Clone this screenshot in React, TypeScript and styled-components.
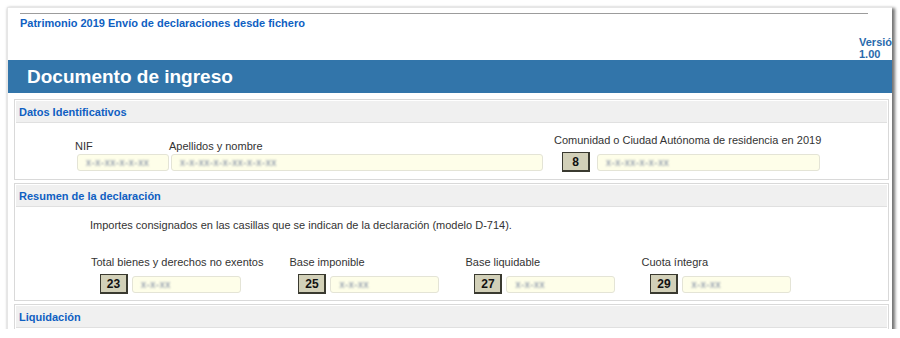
import React from "react";
import styled, { createGlobalStyle } from "styled-components";

const Global = createGlobalStyle`
  html, body { margin: 0; padding: 0; background: #ffffff; }
  body { font-family: "Liberation Sans", Arial, sans-serif; }
  * { box-sizing: border-box; }
`;

const Window = styled.div`
  margin: 7px 0 0 7px;
  width: 885px;
  height: 322px;
  border-left: 1px solid #e6e6e6;
  border-top: 1px solid #e6e6e6;
  box-shadow: 2px 2px 3px 1px rgba(0, 0, 0, 0.55);
  overflow: hidden;
  background: #fff;
  display: flex;
  flex-direction: column;
`;

const TopArea = styled.div`
  display: flex;
  flex-direction: column;
  padding-top: 5px;
`;

const Rule = styled.div`
  margin-left: 12px;
  width: 848px;
  height: 1px;
  background: #9c9c9c;
`;

const AppTitle = styled.div`
  margin-top: 3px;
  padding-left: 12px;
  font-size: 11px;
  line-height: 13px;
  font-weight: bold;
  color: #0f5fc2;
`;

const VersionBox = styled.div`
  align-self: flex-end;
  width: 33px;
  margin-top: 6px;
  white-space: nowrap;
  font-size: 11px;
  line-height: 12px;
  font-weight: bold;
  color: #2a6aac;
`;

const HeaderBar = styled.div`
  height: 33px;
  flex-shrink: 0;
  background: #3275aa;
  display: flex;
  align-items: center;
  padding-left: 19px;
  color: #fff;
  font-size: 19px;
  font-weight: bold;
`;

const Sections = styled.div`
  display: flex;
  flex-direction: column;
  gap: 3px;
  padding: 6px 3px 0 6px;
`;

const Section = styled.div`
  border: 1px solid #d9d9d9;
  padding: 1px;
  flex-shrink: 0;
`;

const SectionHeader = styled.div`
  height: 22px;
  background: #f0f0f0;
  border-bottom: 1px solid #e0e0e0;
  padding-left: 3px;
  display: flex;
  align-items: center;
  font-size: 11px;
  font-weight: bold;
  color: #0f5fc2;
`;

const IdBody = styled.div`
  height: 55px;
  display: flex;
  align-items: flex-end;
  padding: 0 0 6px 59px;
`;

const FieldRow = styled.div<{ $gap?: number }>`
  display: flex;
  align-items: flex-end;
  gap: ${(p) => p.$gap ?? 7}px;
`;

const Field = styled.div<{ $gapAfter?: number; $labelGap?: number; $indent?: number }>`
  display: flex;
  flex-direction: column;
  margin-right: ${(p) => p.$gapAfter ?? 0}px;
  & > ${FieldRow} {
    margin-top: ${(p) => p.$labelGap ?? 1}px;
    padding-left: ${(p) => p.$indent ?? 2}px;
  }
`;

const Label = styled.div`
  font-size: 11px;
  line-height: 14px;
  color: #333;
  white-space: nowrap;
`;

const CodeBox = styled.div`
  width: 28px;
  height: 20px;
  background: #d2d0b8;
  border: 1px solid #3a3a30;
  border-right-width: 2px;
  border-bottom-width: 2px;
  display: flex;
  align-items: center;
  justify-content: center;
  font-size: 12px;
  font-weight: bold;
  color: #111;
`;

const Input = styled.div<{ $w: number }>`
  width: ${(p) => p.$w}px;
  height: 17px;
  margin-bottom: 1px;
  background: #fefee9;
  border: 1px solid #e4e4d6;
  border-radius: 3px;
  display: flex;
  align-items: center;
  padding-left: 8px;
  overflow: hidden;
`;

const Blurred = styled.span`
  font-size: 10px;
  color: #76849c;
  letter-spacing: 0.5px;
  filter: blur(0.8px);
  white-space: nowrap;
`;

const SummaryBody = styled.div`
  height: 92px;
  padding: 11px 0 6px 74px;
  display: flex;
  flex-direction: column;
`;

const Note = styled.div`
  font-size: 11px;
  line-height: 14px;
  color: #333;
`;

const SummaryRow = styled.div`
  display: flex;
  gap: 26px;
  margin-top: 23px;
  margin-left: 1px;
`;

const SummaryField = styled.div`
  display: flex;
  flex-direction: column;
  min-width: 149px;
  & > ${FieldRow} {
    margin-top: 5px;
    padding-left: 9px;
  }
`;

const summary = [
  { label: "Total bienes y derechos no exentos", code: "23" },
  { label: "Base imponible", code: "25" },
  { label: "Base liquidable", code: "27" },
  { label: "Cuota íntegra", code: "29" },
];

export default function App() {
  return (
    <>
      <Global />
      <Window>
        <TopArea>
          <Rule />
          <AppTitle>Patrimonio 2019 Envío de declaraciones desde fichero</AppTitle>
          <VersionBox>
            Versión
            <br />
            1.00
          </VersionBox>
        </TopArea>
        <HeaderBar>Documento de ingreso</HeaderBar>
        <Sections>
          <Section>
            <SectionHeader>Datos Identificativos</SectionHeader>
            <IdBody>
              <Field $gapAfter={0}>
                <Label>NIF</Label>
                <FieldRow>
                  <Input $w={92}>
                    <Blurred>x-x-xx-x-x-xx</Blurred>
                  </Input>
                </FieldRow>
              </Field>
              <Field $gapAfter={11}>
                <Label>Apellidos y nombre</Label>
                <FieldRow>
                  <Input $w={372}>
                    <Blurred>x-x-xx-x-x-xx-x-x-xx</Blurred>
                  </Input>
                </FieldRow>
              </Field>
              <Field $labelGap={5} $indent={8}>
                <Label>Comunidad o Ciudad Autónoma de residencia en 2019</Label>
                <FieldRow $gap={7}>
                  <CodeBox>8</CodeBox>
                  <Input $w={223}>
                    <Blurred>x-x-xx-x-x-xx</Blurred>
                  </Input>
                </FieldRow>
              </Field>
            </IdBody>
          </Section>
          <Section>
            <SectionHeader>Resumen de la declaración</SectionHeader>
            <SummaryBody>
              <Note>
                Importes consignados en las casillas que se indican de la declaración (modelo D-714).
              </Note>
              <SummaryRow>
                {summary.map((s) => (
                  <SummaryField key={s.code}>
                    <Label>{s.label}</Label>
                    <FieldRow $gap={4}>
                      <CodeBox>{s.code}</CodeBox>
                      <Input $w={109}>
                        <Blurred>x-x-xx</Blurred>
                      </Input>
                    </FieldRow>
                  </SummaryField>
                ))}
              </SummaryRow>
            </SummaryBody>
          </Section>
          <Section>
            <SectionHeader>Liquidación</SectionHeader>
          </Section>
        </Sections>
      </Window>
    </>
  );
}
